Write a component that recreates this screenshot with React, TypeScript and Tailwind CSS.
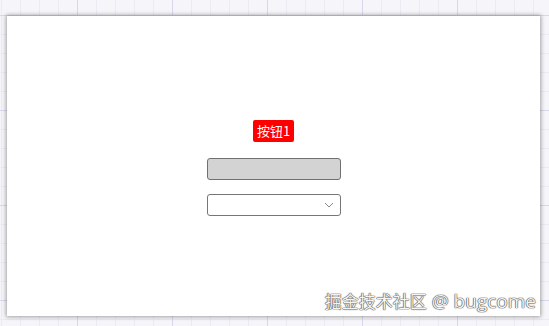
import React from 'react';

const gridBg =
  'bg-[#f6f6fa] bg-[linear-gradient(to_right,#d8d8ec_1px,transparent_1px),linear-gradient(to_bottom,#d8d8ec_1px,transparent_1px),linear-gradient(to_right,#ebebf3_1px,transparent_1px),linear-gradient(to_bottom,#ebebf3_1px,transparent_1px)] bg-[size:95px_95px,95px_95px,19px_19px,19px_19px] bg-[position:-18px_-80px,-18px_-80px,-18px_-80px,-18px_-80px]';

export default function App() {
  return (
    <div className={`w-[549px] h-[326px] overflow-hidden pt-4 pl-[7px] ${gridBg}`}>
      <div
        className="relative w-[533px] h-[300px] pt-[3px] bg-white shadow-[0_0_4px_1px_rgba(0,0,0,0.35)] flex flex-col items-center justify-center"
        style={{ fontFamily: '"Noto Sans CJK SC", "Liberation Sans", sans-serif' }}
      >
        <button className="h-[22px] px-[4px] rounded-[2px] bg-[#ff0000] text-white text-[13px] leading-[22px] mb-4">
          按钮1
        </button>
        <input
          disabled
          className="w-[134px] h-[22px] rounded-[3px] border border-[#707070] bg-[#d3d3d3] mb-[14px]"
        />
        <div className="relative w-[134px] h-[22px] rounded-[3px] border border-[#767676] bg-white">
          <svg
            className="absolute right-[6px] top-[7px]"
            width="10"
            height="6"
            viewBox="0 0 10 6"
            fill="none"
            stroke="#888"
            strokeWidth="1"
          >
            <path d="M1 1l4 4 4-4" />
          </svg>
        </div>
        <span className="absolute right-[4px] bottom-[4px] flex items-baseline gap-[5px] leading-[22px] text-[#f4f4f4] [text-shadow:0_0_1px_#444,0_0_1px_#444,0_0_1px_#444]">
          <span className="text-[17px]" style={{ fontFamily: '"Noto Sans CJK SC", sans-serif' }}>
            掘金技术社区
          </span>
          <span className="text-[19px]" style={{ fontFamily: '"Open Sans", sans-serif' }}>
            @ bugcome
          </span>
        </span>
      </div>
    </div>
  );
}
